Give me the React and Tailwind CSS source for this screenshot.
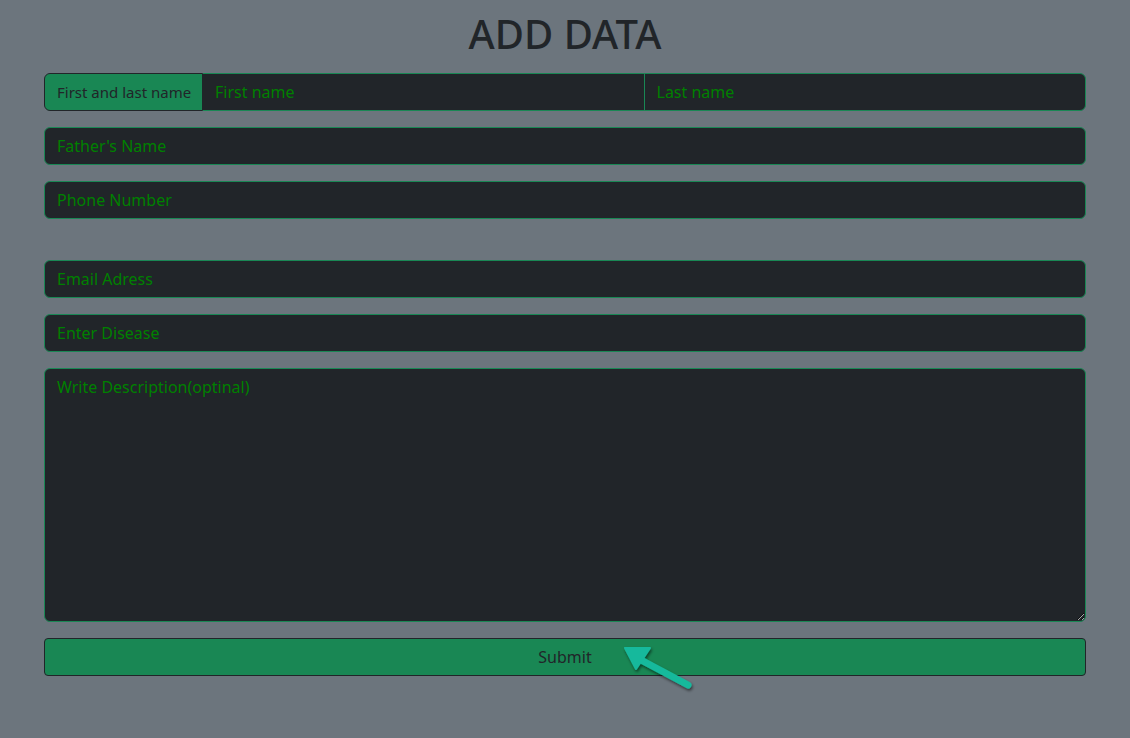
export default function App() {
  const field =
    'w-full h-[38px] rounded-[6px] border border-[#198754] bg-[#212529] px-3 text-base text-[#008000] placeholder:text-[#008000] outline-none';
  return (
    <div
      className="min-h-[738px] bg-[#6c757d] pt-[10px]"
      style={{ fontFamily: '"Noto Sans", "Open Sans", sans-serif' }}
    >
      <h1 className="text-center text-[40px] font-medium leading-[48px] text-[#212529]">ADD DATA</h1>
      <form className="mx-[44px] mt-[15px] flex flex-col" onSubmit={(e) => e.preventDefault()}>
        <div className="flex h-[38px]">
          <span className="flex w-[159px] shrink-0 items-center whitespace-nowrap rounded-l-[6px] border border-[#212529] bg-[#198754] pl-3 pr-1 text-[15px] text-[#212529]">
            First and last name
          </span>
          <input
            placeholder="First name"
            className="h-[38px] min-w-0 flex-1 border-y border-[#198754] bg-[#212529] px-3 text-base text-[#008000] placeholder:text-[#008000] outline-none"
          />
          <input
            placeholder="Last name"
            className="h-[38px] min-w-0 flex-1 rounded-r-[6px] border border-[#198754] bg-[#212529] px-3 text-base text-[#008000] placeholder:text-[#008000] outline-none"
          />
        </div>
        <input placeholder="Father's Name" className={`${field} mt-[16px]`} />
        <input placeholder="Phone Number" className={`${field} mt-[16px]`} />
        <input placeholder="Email Adress" className={`${field} mt-[41px]`} />
        <input placeholder="Enter Disease" className={`${field} mt-[16px]`} />
        <textarea
          placeholder="Write Description(optinal)"
          className="mt-[16px] h-[254px] w-full rounded-[6px] border border-[#198754] bg-[#212529] px-3 py-[6px] text-base text-[#008000] placeholder:text-[#008000] outline-none"
        />
        <div className="relative mt-[16px]">
          <button
            type="submit"
            className="h-[38px] w-full rounded-[4px] border border-[#212529] bg-[#198754] text-base text-[#212529]"
          >
            Submit
          </button>
          <svg
            className="pointer-events-none absolute left-[575px] top-[4px]"
            width="80"
            height="56"
            viewBox="0 0 80 56"
          >
            <defs>
              <filter id="sh" x="-30%" y="-30%" width="160%" height="160%">
                <feDropShadow dx="1" dy="2" stdDeviation="1.5" floodColor="#000" floodOpacity="0.55" />
              </filter>
            </defs>
            <g filter="url(#sh)" fill="#17b99c" stroke="#17b99c" strokeLinejoin="round">
              <line x1="69" y1="43" x2="22" y2="18" strokeWidth="7" strokeLinecap="round" />
              <polygon points="6,6 31,6 17,27" strokeWidth="2" />
            </g>
          </svg>
        </div>
      </form>
    </div>
  );
}
